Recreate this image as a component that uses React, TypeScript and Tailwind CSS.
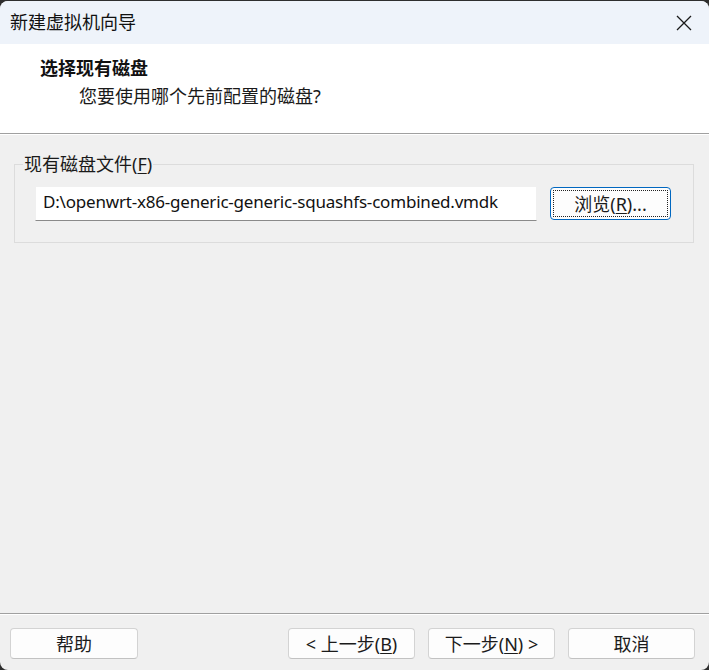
import React from "react";

const font = { fontFamily: '"Noto Sans", "Noto Sans CJK SC", sans-serif' };

function Btn({ children, className = "" }: { children: React.ReactNode; className?: string }) {
  return (
    <button
      className={
        "h-[31px] rounded-[4px] border border-[#d3d3d3] border-b-[#c2c2c2] bg-[#fdfdfd] text-[18px] text-[#1b1b1b] leading-none flex items-center justify-center " +
        className
      }
    >
      {children}
    </button>
  );
}

export default function App() {
  return (
    <div className="w-[709px] h-[670px] bg-[#2e2e2e] pt-[1px]" style={font}>
      <div className="h-[669px] rounded-[8px] overflow-hidden bg-[#f0f0f0] flex flex-col">
        {/* title bar */}
        <div className="h-[43px] bg-[#eef3fa] flex items-center justify-between pl-[10px] pr-[16px]">
          <span className="text-[18px] text-[#111]">新建虚拟机向导</span>
          <svg width="16" height="16" viewBox="0 0 16 16" className="mr-[1px]">
            <path d="M1 1 L15 15 M15 1 L1 15" stroke="#1a1a1a" strokeWidth="1.3" fill="none" />
          </svg>
        </div>
        {/* header */}
        <div className="h-[90px] bg-white border-b border-[#a0a0a0] pt-[11px] pl-[40px]">
          <div className="text-[18px] font-bold text-[#111] leading-[26px]">选择现有磁盘</div>
          <div className="text-[18px] text-[#1a1a1a] leading-[26px] mt-[2px] pl-[39px]">您要使用哪个先前配置的磁盘?</div>
        </div>
        <div className="h-px bg-white" />
        {/* body */}
        <div className="flex-1 flex flex-col">
          <fieldset className="mt-[16px] ml-[14px] mr-[15px] border border-[#dcdcdc] pl-[20px] pr-[22px] pt-[9px] pb-[21px]">
            <legend className="ml-[-12px] px-[1px] text-[18px] text-[#1a1a1a] leading-[26px]">
              现有磁盘文件(<span className="underline underline-offset-2">F</span>)
            </legend>
            <div className="flex items-center gap-[13px]">
              <div className="w-[502px] h-[35px] bg-white border border-[#f0f0f0] border-b-[#8a8a8a] flex items-center pl-[7px] pb-[3px] text-[17px] text-[#111] tracking-[-0.2px]">
                D:\openwrt-x86-generic-generic-squashfs-combined.vmdk
              </div>
              <button className="w-[121px] h-[33px] rounded-[4px] border border-[#0067c0] bg-[#fdfdfd] p-[2px]">
                <div className="w-full h-full border border-dotted border-[#222] flex items-center justify-center text-[18px] text-[#1b1b1b] leading-none">
                  浏览(<span className="underline underline-offset-2">R</span>)...
                </div>
              </button>
            </div>
          </fieldset>
          <div className="flex-1" />
          <div className="h-px bg-[#a0a0a0]" />
          <div className="h-px bg-white" />
          <div className="flex items-center pl-[10px] pr-[14px] pt-[13px] pb-[11px]">
            <Btn className="w-[128px]">帮助</Btn>
            <div className="flex-1" />
            <div className="flex gap-[13px]">
              <Btn className="w-[127px]">
                &lt; 上一步(<span className="underline underline-offset-2">B</span>)
              </Btn>
              <Btn className="w-[127px]">
                下一步(<span className="underline underline-offset-2">N</span>) &gt;
              </Btn>
              <Btn className="w-[127px]">取消</Btn>
            </div>
          </div>
        </div>
      </div>
    </div>
  );
}
